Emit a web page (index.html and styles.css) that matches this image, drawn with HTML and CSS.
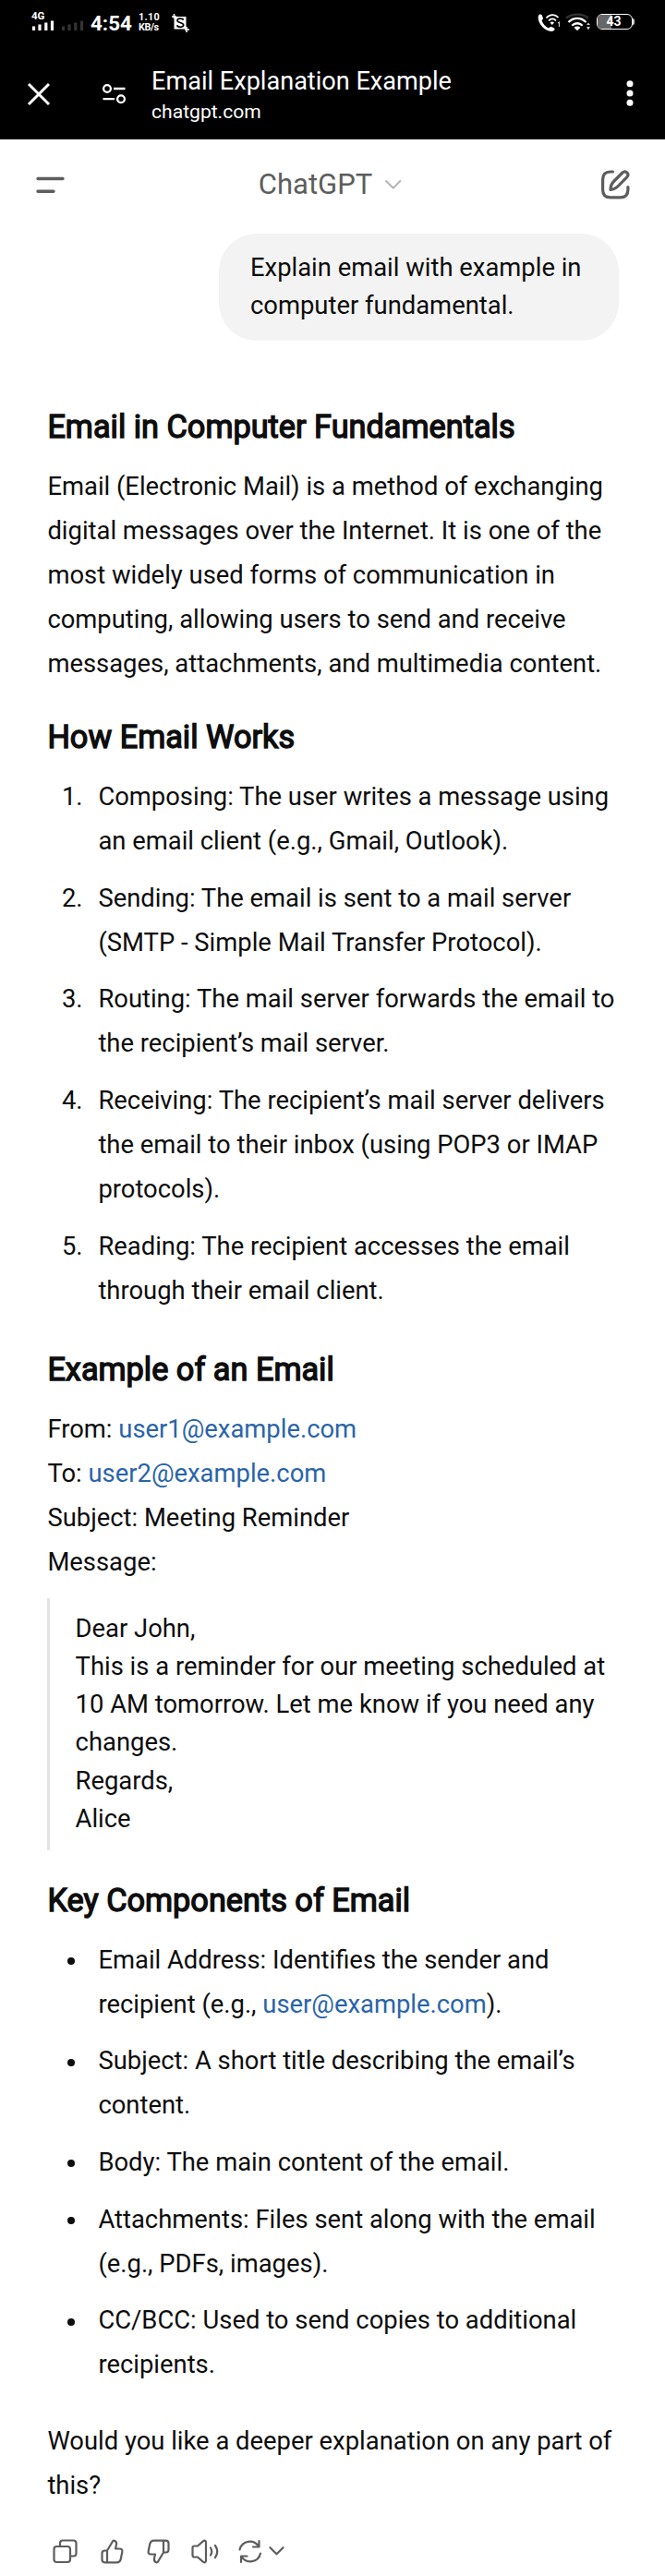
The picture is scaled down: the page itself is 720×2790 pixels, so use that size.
FILE: index.html
```html
<!DOCTYPE html>
<html lang="en">
<head>
<meta charset="utf-8">
<title>Email Explanation Example</title>
<link rel="stylesheet" href="styles.css">
</head>
<body>
<div class="chrome">
  <div class="status">
    <div class="net"><span>4G</span>
      <svg width="26" height="12" viewBox="0 0 26 12"><path d="M2.500 11V6.500M9 11V4.500M15.800 11V2.500M22.500 11V.500" stroke="#fff" stroke-width="3.200"/></svg>
    </div>
    <svg class="sim2" width="26" height="12" viewBox="0 0 26 12"><path d="M2.500 11V6.500M9 11V4.500M15.800 11V2.500M22.500 11V.500" stroke="#333" stroke-width="3.200"/></svg>
    <span class="clock">4:54</span>
    <span class="rate"><span>1.10</span><span>KB/s</span></span>
    <svg class="shot" width="19" height="20" viewBox="0 0 19 20"><path d="M2.500 3h13v13.500h-13z" fill="#fff"/><path d="M0 3h5M2.500 0v5M14 17h5M16 14v6" stroke="#fff" stroke-width="1.600"/><path d="M12.500 6.800C12 4.700 6 4.500 6 7.300c0 2.600 6.700 1.800 6.700 4.800 0 3-6.400 2.800-7 .200" fill="none" stroke="#000" stroke-width="1.700"/></svg>
    <svg class="call" width="26" height="22" viewBox="0 0 26 22"><path d="M1 3C2 1 4 1 5 3l1 3c0 1-1.500 2-1.500 2 1 3.500 4 7 7.500 8.500l2-1.500c1-.500 4 1 4.500 2 .500 1.500-1.500 3-3.500 3C7 20-1 10 1 3z" fill="#fff"/><path d="M9.500 5.500c4-4.300 9.500-4.300 13-.500M12 8.500c2.800-2.800 5.500-2.800 8-.200" fill="none" stroke="#fff" stroke-width="1.700"/><path d="M13.500 10.500q2.500-2 4.500 0l-2.200 2.400z" fill="#fff"/><path d="M22 11l1.500-1V15" fill="none" stroke="#ccc" stroke-width="1.200"/></svg>
    <svg class="wifi" width="27" height="20" viewBox="0 0 27 20"><g fill="none" stroke="#fff" stroke-width="2.300"><path d="M1 5.500C8 .300 18 .300 25 5.500" stroke="#333"/><path d="M3.500 10c5.500-5.500 13.500-5.500 19 0M7.300 13.700c3.300-3.300 8.100-3.300 11.400 0"/></g><path d="M9.500 15.700q3.500-2.500 7 0L13 19.200z" fill="#fff"/><path d="M23 13l2-2.500 2 2.500zM23 15h4l-2 3.500z" fill="#ccc"/></svg>
    <div class="battery"><i class="cell"></i><b>43</b></div><i class="tip"></i>
  </div>
  <div class="toolbar">
    <svg class="close" width="26" height="26" viewBox="0 0 26 26"><path d="M2 2l22 22M24 2L2 24" stroke="#fff" stroke-width="3"/></svg>
    <svg class="tune" width="28" height="24" viewBox="0 0 28 24"><g fill="none" stroke="#fff" stroke-width="2.300"><circle cx="6" cy="6" r="3.900"/><circle cx="21" cy="17.200" r="3.900"/><path d="M13 6h12.500M1.500 17.200H14"/></g></svg>
    <div class="page"><div class="title">Email Explanation Example</div><div class="host">chatgpt.com</div></div>
    <svg class="more" width="8" height="28" viewBox="0 0 8 28" fill="#fff"><circle cx="4" cy="3.700" r="3.500"/><circle cx="4" cy="14" r="3.500"/><circle cx="4" cy="24.300" r="3.500"/></svg>
  </div>
</div>
<header class="header">
  <svg width="32" height="20" viewBox="0 0 32 20"><path d="M2 3.500h27M2 17.300h17" stroke="#5d5d5d" stroke-width="3.400" stroke-linecap="round"/></svg>
  <div class="model">ChatGPT<svg width="20" height="12" viewBox="0 0 20 12"><path d="M1.500 1.500l8.200 8.200 8.200-8.200" fill="none" stroke="#b4b4b4" stroke-width="2"/></svg></div>
  <svg width="34" height="34" viewBox="0 0 34 34" fill="none" stroke="#5d5d5d" stroke-width="3.200" stroke-linecap="round" stroke-linejoin="round"><path d="M14.500 3h-2.500Q3.600 3 3.600 11.500v11q0 8.400 8.400 8.400h10.500q8.400 0 8.400-8.400v-3"/><path d="M12 22.500q0-5.500 3.500-9L25 4q2.500-2.200 4.800 0t0 4.800l-9.500 9.700q-3.300 3.500-8.300 4z"/></svg>
</header>
<main class="thread">
  <div class="bubble">Explain email with example in<br>computer fundamental.</div>
  <article class="answer">
    <h3>Email in Computer Fundamentals</h3>
    <p>Email (Electronic Mail) is a method of exchanging<br>digital messages over the Internet. It is one of the<br>most widely used forms of communication in<br>computing, allowing users to send and receive<br>messages, attachments, and multimedia content.</p>
    <h3 class="after-text">How Email Works</h3>
    <ol>
      <li><span>1.</span><div>Composing: The user writes a message using<br>an email client (e.g., Gmail, Outlook).</div></li>
      <li><span>2.</span><div>Sending: The email is sent to a mail server<br>(SMTP - Simple Mail Transfer Protocol).</div></li>
      <li><span>3.</span><div>Routing: The mail server forwards the email to<br>the recipient’s mail server.</div></li>
      <li><span>4.</span><div>Receiving: The recipient’s mail server delivers<br>the email to their inbox (using POP3 or IMAP<br>protocols).</div></li>
      <li><span>5.</span><div>Reading: The recipient accesses the email<br>through their email client.</div></li>
    </ol>
    <h3 class="after-list">Example of an Email</h3>
    <p>From: <a>user1@example.com</a><br>To: <a>user2@example.com</a><br>Subject: Meeting Reminder<br>Message:</p>
    <blockquote>Dear John,<br>This is a reminder for our meeting scheduled at<br>10 AM tomorrow. Let me know if you need any<br>changes.<br>Regards,<br>Alice</blockquote>
    <h3 class="after-quote">Key Components of Email</h3>
    <ul>
      <li><i class="dot"></i><div>Email Address: Identifies the sender and<br>recipient (e.g., <a>user@example.com</a>).</div></li>
      <li><i class="dot"></i><div>Subject: A short title describing the email’s<br>content.</div></li>
      <li><i class="dot"></i><div>Body: The main content of the email.</div></li>
      <li><i class="dot"></i><div>Attachments: Files sent along with the email<br>(e.g., PDFs, images).</div></li>
      <li><i class="dot"></i><div>CC/BCC: Used to send copies to additional<br>recipients.</div></li>
    </ul>
    <p class="closing">Would you like a deeper explanation on any part of<br>this?</p>
    <div class="actions">
      <svg width="27" height="27" viewBox="0 0 27 27"><rect x="1.500" y="8" width="17.500" height="17" rx="3"/><path d="M8 8V4.500q0-3 3-3h11.500q3 0 3 3V15.500q0 3-3 3H19"/></svg>
      <svg width="25" height="27" viewBox="0 0 25 27"><path d="M7 12.500L13 2.500q.600-1 1.700-.700 3 1 2.300 4.200l-1 4.500h4.500q3.500 0 2.800 3.500l-1.500 7.500q-.800 3.800-4.500 3.800H4.500q-3 0-3-3v-6.800q0-3 3-3zM7 12.500v12.800"/></svg>
      <svg width="25" height="27" viewBox="0 0 25 27"><path transform="rotate(180 12.500 13.500)" d="M7 12.500L13 2.500q.600-1 1.700-.700 3 1 2.300 4.200l-1 4.500h4.500q3.500 0 2.800 3.500l-1.500 7.500q-.800 3.800-4.500 3.800H4.500q-3 0-3-3v-6.800q0-3 3-3zM7 12.500v12.800"/></svg>
      <svg class="speaker" width="31" height="27" viewBox="0 0 31 27"><path d="M3.500 7.500H7l5.500-4.800q3.500-2.500 3.500 1v19.600q0 3.500-3.500 1L7 19.500H3.500q-2 0-2-2v-8q0-2 2-2zM21 9.500q2.500 4 0 8M26 7q4.500 6.500 0 13"/></svg>
      <svg class="retry" width="26" height="27" viewBox="0 0 26 27"><path d="M1.500 11.500C4 1 17 0 22 8M22.500 2v6.500H16M24 15.500C21.500 26 8.500 27 3.500 19M3 25v-6.500h6.500"/></svg>
      <svg class="caret" width="17" height="10" viewBox="0 0 17 10"><path d="M1.500 1.200l7 7 7-7"/></svg>
    </div>
  </article>
</main>
</body>
</html>
```
FILE: styles.css
```css
* { box-sizing: border-box; }
body { margin: 0; width: 720px; height: 2790px; overflow: hidden; background: #fff; color: #0d0d0d; font-family: Roboto, sans-serif; font-size: 27.400px; line-height: 48px; }
svg { display: block; flex: none; }

.chrome { height: 151px; background: #000; color: #fff; }
.status { display: flex; align-items: flex-start; height: 50px; padding-left: 34px; }
.net { width: 26px; padding-top: 13px; font-size: 11.500px; line-height: 9px; font-weight: 700; }
.sim2 { margin: 22px 0 0 6px; }
.clock { width: 45px; margin: 12px 0 0 6px; font-size: 22.400px; line-height: 26px; font-weight: 700; }
.rate { display: flex; flex-direction: column; width: 22px; margin: 14px 0 0 7px; font-size: 10.800px; line-height: 10.500px; font-weight: 700; }
.rate span:first-child { letter-spacing: .3px; }
.rate span:last-child { letter-spacing: -.4px; }
.shot { margin: 15px 0 0 14px; }
.call { margin: 14px 0 0 377px; }
.wifi { margin: 14px 0 0 4px; }
.battery { display: flex; position: relative; justify-content: center; width: 39px; height: 17px; margin: 15px 0 0 7px; border: 1.500px solid #fff; border-radius: 6px; font-size: 14px; line-height: 15px; overflow: hidden; }
.battery b { position: relative; left: -1px; }
.cell { position: absolute; left: 0; top: 0; width: 15px; height: 15px; background: #666; }
.tip { width: 2px; height: 7px; margin-top: 20px; background: #ccc; border-radius: 0 2px 2px 0; }
.toolbar { display: flex; align-items: center; height: 101px; padding: 0 34px 0 29px; }
.close { margin-top: 2px; }
.tune { margin: 2px 0 0 55px; }
.page { margin-left: 26px; flex: 1; }
.title { font-size: 27.100px; line-height: 32px; margin-top: 4px; }
.host { font-size: 21.100px; line-height: 27px; margin-top: 3px; }

.header { display: flex; align-items: center; justify-content: space-between; height: 98px; margin-bottom: 4px; padding: 0 37px 0 39px; color: #5d5d5d; }
.model { display: flex; align-items: center; gap: 13px; margin-right: 4px; font-size: 31px; }

.thread { display: flex; flex-direction: column; padding: 0 50px 0 51.400px; }
.bubble { align-self: flex-end; width: 433px; height: 116px; padding: 17px 34px; border-radius: 41px; background: #f3f3f3; line-height: 41.140px; }
.answer { padding-top: 69px; }
h3 { margin: 0 0 17px; font-size: 34.290px; line-height: 48px; font-weight: 400; -webkit-text-stroke: 1.400px #0d0d0d; }
p, ol, ul { margin: 0; padding: 0; }
.after-text { margin-top: 31px; }
.after-list { margin-top: 37.200px; }
.after-quote { margin-top: 29.700px; }
li { display: grid; grid-template-columns: 39.500px 1fr; padding-left: 15.500px; margin-bottom: 13.710px; }
li:last-child { margin-bottom: 0; }
.dot { width: 8px; height: 8px; margin: 21.500px 0 0 6px; border-radius: 50%; background: #0d0d0d; }
a { color: #2964aa; }
blockquote { margin: 15px 0 0; padding: 13px 0 13px 27.200px; border-left: 3.400px solid #e3e3e3; line-height: 41.140px; }
.closing { margin-top: 34.300px; }
.actions { display: flex; align-items: center; margin: 34px 0 0 6px; gap: 25px; }
.actions svg { fill: none; stroke: #5d5d5d; stroke-width: 2.200; stroke-linejoin: round; stroke-linecap: round; }
.actions .speaker { margin-left: -2px; }
.actions .retry { margin-left: -5px; }
.actions .caret { margin-left: -18px; }
```
